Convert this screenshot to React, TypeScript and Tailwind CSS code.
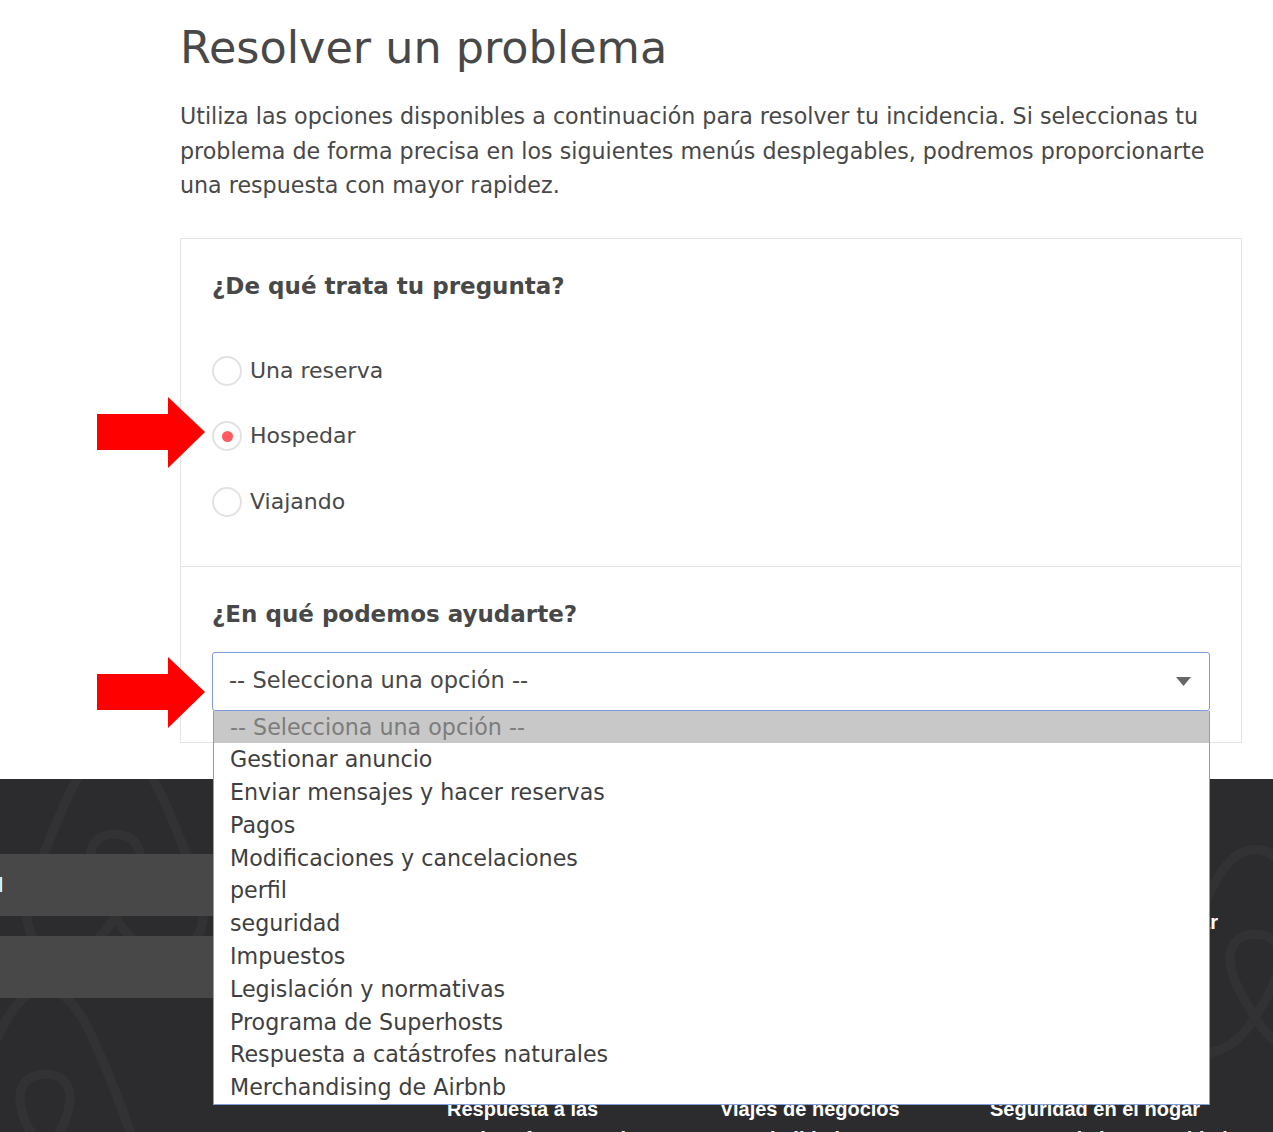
import React, { useState } from 'react'

const TOPICS = ['Una reserva', 'Hospedar', 'Viajando']

const OPTIONS = [
  '-- Selecciona una opción --',
  'Gestionar anuncio',
  'Enviar mensajes y hacer reservas',
  'Pagos',
  'Modificaciones y cancelaciones',
  'perfil',
  'seguridad',
  'Impuestos',
  'Legislación y normativas',
  'Programa de Superhosts',
  'Respuesta a catástrofes naturales',
  'Merchandising de Airbnb',
]

function Radio({ label, checked, onClick }: { label: string; checked: boolean; onClick: () => void }) {
  return (
    <button onClick={onClick} className="flex h-[32px] items-center gap-[8px] text-left">
      <span className="flex h-[30px] w-[30px] items-center justify-center rounded-full border-2 border-[#e2e2e2] bg-white">
        {checked && <span className="h-[11px] w-[11px] rounded-full bg-[#ff5a5f]" />}
      </span>
      <span className="text-[22px] leading-[32px] text-[#484848]">{label}</span>
    </button>
  )
}

function Arrow({ className }: { className: string }) {
  return (
    <svg className={className} viewBox="0 0 108 71" fill="#ff0000">
      <polygon points="0,17 71,17 71,0 108,35 71,71 71,53 0,53" />
    </svg>
  )
}

function Belo({ className }: { className: string }) {
  // faint logo shapes in the footer background
  return (
    <svg className={className} viewBox="0 0 200 220" fill="none" stroke="#323234" strokeWidth="9">
      <path d="M100 10 C 75 10, 60 40, 40 90 C 20 140, 5 170, 25 195 C 45 215, 80 205, 100 170 C 120 205, 155 215, 175 195 C 195 170, 180 140, 160 90 C 140 40, 125 10, 100 10 Z" />
      <path d="M100 170 C 80 140, 70 115, 80 100 C 88 88, 112 88, 120 100 C 130 115, 120 140, 100 170 Z" />
    </svg>
  )
}

export default function App() {
  const [topic, setTopic] = useState('Hospedar')

  return (
    <div className="min-h-[1132px] overflow-hidden bg-white font-['DejaVu_Sans',sans-serif] text-[#484848]">
      <main className="relative z-10 pl-[180px] pt-[22px]">
        <h1 className="text-[44.5px] font-normal leading-[52px] text-[#484848]">Resolver un problema</h1>

        <p className="mt-[25px] w-[1062px] text-[22.2px] leading-[34.5px] text-[#484848]">
          Utiliza las opciones disponibles a continuación para resolver tu incidencia. Si seleccionas tu problema de forma precisa en los siguientes menús desplegables, podremos proporcionarte una respuesta con mayor rapidez.
        </p>

        <div className="mt-[35px] w-[1062px] border border-[#e4e4e4]">
          <section className="px-[31px] pb-[48px] pt-[31px]">
            <h2 className="text-[23px] font-bold leading-[32px] text-[#484848]">¿De qué trata tu pregunta?</h2>
            <div className="mt-[53px] flex flex-col gap-[33.5px]">
              {TOPICS.map(t => (
                <Radio key={t} label={t} checked={topic === t} onClick={() => setTopic(t)} />
              ))}
            </div>
          </section>

          <section className="border-t border-[#e4e4e4] px-[31px] pb-[31px] pt-[31px]">
            <h2 className="text-[23px] font-bold leading-[32px] text-[#484848]">¿En qué podemos ayudarte?</h2>
            <div className="relative mt-[22px]">
              <div className="flex h-[59px] items-center justify-between rounded-[3px] border border-[#7b9bdc] bg-white pl-[16px] pr-[18px]">
                <span className="text-[22.5px] text-[#484848]">-- Selecciona una opción --</span>
                <svg className="h-[9px] w-[15px]" viewBox="0 0 15 9" fill="#666">
                  <polygon points="0,0 15,0 7.5,9" />
                </svg>
              </div>
              {/* open option list */}
              <ul className="absolute left-[1px] right-0 top-full border-x border-b border-[#7f9fd6] bg-white">
                {OPTIONS.map((o, i) => (
                  <li
                    key={o}
                    className={
                      i === 0
                        ? 'bg-[#c8c8c8] pl-[16px] text-[22.2px] leading-[32.8px] text-[#7c7c7c]'
                        : 'pl-[16px] text-[22.2px] leading-[32.8px] text-[#3f3f3f]'
                    }
                  >
                    {o}
                  </li>
                ))}
              </ul>
            </div>
          </section>
        </div>

        <Arrow className="absolute left-[97px] top-[397px] h-[71px] w-[108px]" />
        <Arrow className="absolute left-[97px] top-[657px] h-[71px] w-[108px]" />
      </main>

      <footer className="relative mt-[36px] h-[360px] overflow-hidden bg-[#2c2c2e] font-['Liberation_Sans',Arial,sans-serif] text-white">
        <Belo className="absolute left-[10px] top-[-40px] h-[230px] w-[210px]" />
        <Belo className="absolute left-[-60px] top-[200px] h-[230px] w-[210px]" />
        <Belo className="absolute left-[1150px] top-[60px] h-[230px] w-[210px]" />

        <div className="relative flex pt-[75px]">
          <div className="flex w-[447px] flex-col gap-[20px]">
            <div className="flex h-[62px] w-[400px] items-center overflow-hidden bg-[#484848]">
              <span className="ml-[-69px] whitespace-nowrap text-[20px]">Español</span>
            </div>
            <div className="h-[62px] w-[400px] bg-[#484848]" />
          </div>

          <div className="flex w-[273px] flex-col pt-[240px] text-[20px] font-bold leading-[30px]">
            <span>Respuesta a las</span>
            <span>catástrofes naturales</span>
          </div>

          <div className="flex w-[270px] flex-col pt-[240px] text-[20px] font-bold leading-[30px]">
            <span>Viajes de negocios</span>
            <span>Hospitalidad</span>
          </div>

          <div className="flex flex-col text-[20px] font-bold leading-[30px]">
            <div className="mt-[53px] flex w-[228px] justify-end whitespace-nowrap">
              <span>Ser anfitrión y hospedar</span>
            </div>
            <span className="mt-[157px]">Seguridad en el hogar</span>
            <span>Normas de la comunidad</span>
          </div>
        </div>
      </footer>
    </div>
  )
}
